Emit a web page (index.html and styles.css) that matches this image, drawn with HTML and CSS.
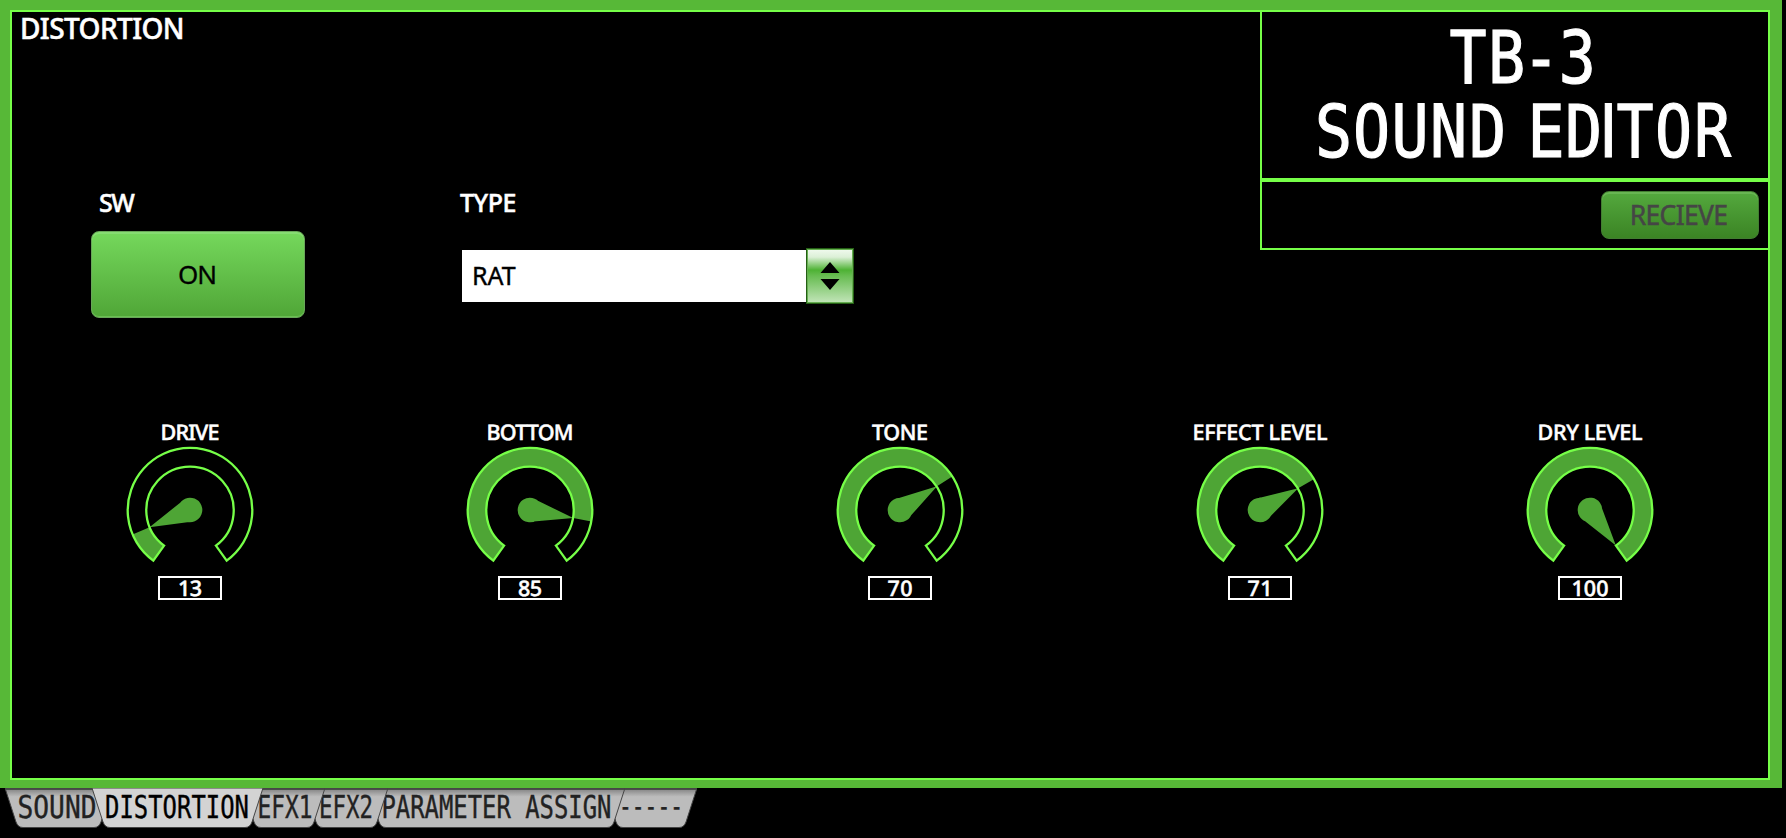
FILE: index.html
```html
<!DOCTYPE html>
<html lang="en">
<head>
<meta charset="utf-8">
<title>TB-3 Sound Editor</title>
<link rel="stylesheet" href="styles.css">
</head>
<body>
<svg class="defs" width="0" height="0">
  <defs>
    <path id="ring" d="M-36.7 50.6A62.3 62.3 0 1 1 36.7 50.6L25.9 35.6A43.7 43.7 0 1 0 -25.9 35.6Z"/>
    <path id="pointer" d="M-12.3 0L0 -44L12.3 0A12.3 12.3 0 0 1 -12.3 0ZM-12.3 0A12.3 12.3 0 0 1 12.3 0Z"/>
    <linearGradient id="tabfill" x1="0" y1="0" x2="0" y2="1">
      <stop offset="0" stop-color="#484848"/><stop offset=".05" stop-color="#4c4c4c"/>
      <stop offset=".06" stop-color="#8e8e8e"/><stop offset=".22" stop-color="#bcbcbc"/><stop offset="1" stop-color="#bcbcbc"/>
    </linearGradient>
  </defs>
</svg>
<main class="frame">
  <div class="screen">
    <section class="page">
      <h1 class="page-title">DISTORTION</h1>
      <div class="controls">
        <div class="field switch">
          <span class="label">SW</span>
          <button class="btn btn-on">ON</button>
        </div>
        <div class="field type">
          <span class="label">TYPE</span>
          <div class="select">
            <span class="select-value">RAT</span>
            <span class="select-arrow"><svg width="18" height="28" viewBox="0 0 18 28"><path d="M9 0L18.5 11H-.5ZM9 28L18.5 17H-.5Z"/></svg></span>
          </div>
        </div>
      </div>
    </section>
    <aside class="brand">
      <svg class="logo" width="506" height="166" viewBox="0 0 506 166">
        <g transform="scale(.85 1)">
          <text y="71.5" x="242.5 287.6 328.2 371">TB-3</text>
          <text y="145.5" x="84.1 128.9 174.1 219.4 265.3 302 334.1 378.2 407.6 438.8 484.1 530">SOUND ED<tspan class="bar">I</tspan>TOR</text>
        </g>
      </svg>
      <div class="actions"><button class="btn btn-receive" disabled>RECIEVE</button></div>
    </aside>
    <section class="knobs">
      <svg class="knob" width="160" height="200" viewBox="0 0 160 200">
        <text class="name" x="80" y="30" textLength="59">DRIVE</text>
        <g transform="translate(80 100)"><circle class="arc" r="53.2" pathLength="360" stroke-dasharray="31 360" transform="rotate(126)"/><use href="#pointer" class="needle" transform="rotate(247)"/><use href="#ring" class="ring"/></g>
        <rect class="box" x="49" y="167" width="62" height="22"/><text class="value" x="80" y="186" textLength="24">13</text>
      </svg>
      <svg class="knob" width="160" height="200" viewBox="0 0 160 200">
        <text class="name" x="80" y="30" textLength="87">BOTTOM</text>
        <g transform="translate(80 100)"><circle class="arc" r="53.2" pathLength="360" stroke-dasharray="244.6 360" transform="rotate(126)"/><use href="#pointer" class="needle" transform="rotate(100.6)"/><use href="#ring" class="ring"/></g>
        <rect class="box" x="49" y="167" width="62" height="22"/><text class="value" x="80" y="186" textLength="24">85</text>
      </svg>
      <svg class="knob" width="160" height="200" viewBox="0 0 160 200">
        <text class="name" x="80" y="30" textLength="56">TONE</text>
        <g transform="translate(80 100)"><circle class="arc" r="53.2" pathLength="360" stroke-dasharray="201.4 360" transform="rotate(126)"/><use href="#pointer" class="needle" transform="rotate(57.4)"/><use href="#ring" class="ring"/></g>
        <rect class="box" x="49" y="167" width="62" height="22"/><text class="value" x="80" y="186" textLength="25">70</text>
      </svg>
      <svg class="knob" width="160" height="200" viewBox="0 0 160 200">
        <text class="name" x="80" y="30" textLength="135">EFFECT LEVEL</text>
        <g transform="translate(80 100)"><circle class="arc" r="53.2" pathLength="360" stroke-dasharray="204.3 360" transform="rotate(126)"/><use href="#pointer" class="needle" transform="rotate(60.3)"/><use href="#ring" class="ring"/></g>
        <rect class="box" x="49" y="167" width="62" height="22"/><text class="value" x="80" y="186" textLength="25">71</text>
      </svg>
      <svg class="knob" width="160" height="200" viewBox="0 0 160 200">
        <text class="name" x="80" y="30" textLength="105">DRY LEVEL</text>
        <g transform="translate(80 100)"><circle class="arc" r="53.2" pathLength="360" stroke-dasharray="288 360" transform="rotate(126)"/><use href="#pointer" class="needle" transform="rotate(144)"/><use href="#ring" class="ring"/></g>
        <rect class="box" x="49" y="167" width="62" height="22"/><text class="value" x="80" y="186" textLength="37">100</text>
      </svg>
    </section>
  </div>
</main>
<nav class="tabs">
  <svg class="tab" width="107" height="40" viewBox="0 0 107 40"><path d="M0 0L11 34Q13 39.5 18 39.5H89Q94 39.5 96 34L107 0Z"/><text x="12.5" y="30" textLength="79" lengthAdjust="spacingAndGlyphs">SOUND</text></svg>
  <svg class="tab active" width="171" height="40" viewBox="0 0 171 40"><path d="M0 0L11 34Q13 39.5 18 39.5H153Q158 39.5 160 34L171 0Z"/><text x="13" y="30" textLength="144" lengthAdjust="spacingAndGlyphs">DISTORTION</text></svg>
  <svg class="tab" width="82" height="40" viewBox="0 0 82 40"><path d="M0 0L11 34Q13 39.5 18 39.5H64Q69 39.5 71 34L82 0Z"/><text x="14.5" y="30" textLength="55" lengthAdjust="spacingAndGlyphs">EFX1</text></svg>
  <svg class="tab" width="83" height="40" viewBox="0 0 83 40"><path d="M0 0L11 34Q13 39.5 18 39.5H65Q70 39.5 72 34L83 0Z"/><text x="14" y="30" textLength="54" lengthAdjust="spacingAndGlyphs">EFX2</text></svg>
  <svg class="tab" width="257" height="40" viewBox="0 0 257 40"><path d="M0 0L11 34Q13 39.5 18 39.5H239Q244 39.5 246 34L257 0Z"/><text x="13.5" y="30" textLength="230" lengthAdjust="spacingAndGlyphs">PARAMETER ASSIGN</text></svg>
  <svg class="tab" width="92" height="40" viewBox="0 0 92 40"><path d="M0 0L11 34Q13 39.5 18 39.5H74Q79 39.5 81 34L92 0Z"/><text x="14" y="29" textLength="64" lengthAdjust="spacingAndGlyphs">-----</text></svg>
</nav>
</body>
</html>
```
FILE: styles.css
```css
* { box-sizing: border-box; }
body {
  margin: 0;
  width: 1786px;
  height: 838px;
  overflow: hidden;
  background: #000;
  color: #fff;
  font-family: "Noto Sans", "Open Sans", sans-serif;
}
.defs { display: block; height: 0; }
.frame {
  width: 1782px;
  height: 788px;
  padding: 10px 12px 8px 10px;
  background: #57b837;
}
.screen {
  height: 770px;
  border: 2px solid #76ff48;
  background: #000;
  display: grid;
  grid-template-columns: 1fr 508px;
  grid-template-rows: 398px 200px;
}
.page-title {
  margin: 0;
  padding: 0 0 0 8px;
  height: 32px;
  font-size: 28px;
  font-weight: 500;
  line-height: 32px;
  letter-spacing: -0.6px;
  -webkit-text-stroke: 0.5px #fff;
}
.controls { display: flex; padding: 145px 0 0 79px; }
.field { display: flex; flex-direction: column; }
.switch { width: 369px; }
.label {
  height: 28px;
  line-height: 26px;
  font-size: 25px;
  font-weight: 500;
  letter-spacing: -0.5px;
  -webkit-text-stroke: 0.5px #fff;
}
.switch .label { padding-left: 8px; letter-spacing: -1.5px; }
.btn {
  padding: 0;
  border: 1px solid #427d31;
  border-radius: 8px;
  font-family: inherit;
}
.btn-on {
  width: 214px;
  height: 87px;
  margin-top: 14px;
  padding: 0 2px 2px 0;
  font-size: 26px;
  letter-spacing: -1px;
  color: #000;
  -webkit-text-stroke: 0.3px #000;
  background: linear-gradient(#75d85c, #50a637);
  border-color: #68a658;
  box-shadow: inset 0 2px 0 #86dc72, inset 0 -1px 0 #69c052;
}
.select {
  display: flex;
  align-items: center;
  width: 392px;
  height: 56px;
  margin-top: 31px;
  margin-left: 2px;
}
.select-value {
  flex: 1;
  height: 52px;
  padding-left: 10px;
  background: #fff;
  color: #000;
  font-size: 25px;
  line-height: 50px;
  letter-spacing: 0;
  -webkit-text-stroke: 0.4px #000;
}
.select-arrow {
  display: flex;
  align-items: center;
  justify-content: center;
  width: 48px;
  height: 56px;
  border: 1px solid #245f14;
  box-shadow: inset 0 0 0 1px #65ad50;
  background: linear-gradient(#f1faef 0, #dcf0d7 15%, #4eb234 39%, #68bd52 50%, #c3e5ba 100%);
}
.select-arrow svg { overflow: visible; }
.brand {
  display: grid;
  grid-template-rows: 166px 70px;
  align-self: start;
  height: 238px;
  border-left: 2px solid #76ff48;
  border-bottom: 2px solid #76ff48;
}
.logo text {
  fill: #fff;
  stroke: #fff;
  stroke-width: 1.2;
  font-family: "DejaVu Sans Mono", monospace;
  font-size: 72.5px;
  text-anchor: middle;
}
.bar { font-family: "DejaVu Sans", sans-serif; }
.actions {
  display: flex;
  justify-content: flex-end;
  border-top: 4px solid #76ff48;
  padding: 9px 9px 0 0;
}
.btn-receive {
  width: 158px;
  height: 48px;
  padding-right: 3px;
  font-size: 26.5px;
  letter-spacing: -0.7px;
  color: #454545;
  -webkit-text-stroke: 0.5px #454545;
  background: linear-gradient(#54a93e, #3b8424);
  box-shadow: inset 0 2px 0 #68b553;
}
.knobs {
  grid-column: 1 / 3;
  display: grid;
  grid-template-columns: 340px 370px 360px 330px 160px;
  padding-left: 98px;
}
.knob text { fill: #fff; stroke: #fff; stroke-width: 0.5; text-anchor: middle; font-weight: 500; }
.name { font-size: 21.5px; }
.value { font-size: 21.5px; }
.arc { fill: none; stroke: #4ea535; stroke-width: 18.5; }
.needle { fill: #4ea535; }
.ring { fill: none; stroke: #76ff48; stroke-width: 2.3; }
.box { fill: none; stroke: #fff; stroke-width: 2; }
.tabs { display: flex; padding-left: 5px; }
.tab { position: relative; flex: none; margin-right: -20px; z-index: 1; }
.tab path { fill: url(#tabfill); stroke: #444; stroke-width: 1; }
.tab text {
  fill: #222;
  stroke: #222;
  stroke-width: 0.4;
  font-family: "DejaVu Sans Mono", monospace;
  font-size: 31.5px;
}
.tab.active { z-index: 9; }
.tab.active path { fill: #d3d3d3; }
.tab.active text { fill: #000; stroke: #000; }
.tab:nth-child(3) { z-index: 5; }
.tab:nth-child(4) { z-index: 4; }
.tab:nth-child(5) { z-index: 3; }
.tab:nth-child(6) { z-index: 2; }
.name, .value, .tab text { text-rendering: geometricPrecision; }
```
